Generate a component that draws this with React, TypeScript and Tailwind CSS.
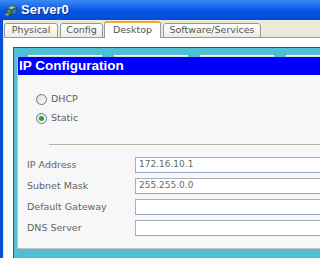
const TABS = [
  { name: "Physical", w: "w-[54px]" },
  { name: "Config", w: "w-[43px]" },
];

function ServerIcon() {
  return (
    <svg width="13" height="13" viewBox="0 0 13 13">
      <path d="M2 4 L7 1.5 L11.5 3.5 L6.5 6 Z" fill="#7fd0a8" stroke="#1d4a3a" strokeWidth="0.7" />
      <path d="M2 4 L6.5 6 L6.5 11.5 L2 9.5 Z" fill="#2f8f5a" stroke="#1d4a3a" strokeWidth="0.7" />
      <path d="M6.5 6 L11.5 3.5 L11.5 9 L6.5 11.5 Z" fill="#3a6fb8" stroke="#1d3a6a" strokeWidth="0.7" />
      <rect x="3" y="6.5" width="2" height="1.2" fill="#e0506a" />
      <rect x="0.5" y="9.5" width="3" height="2" fill="#c8a040" />
    </svg>
  );
}

function Radio({ checked }: { checked?: boolean }) {
  return (
    <span className="w-[11px] h-[11px] rounded-full border border-[#5f7896] bg-linear-to-br from-[#dcdcd6] to-white flex items-center justify-center shrink-0">
      {checked && <span className="w-[5px] h-[5px] rounded-full bg-[#2aa52a]" />}
    </span>
  );
}

const FIELDS = [
  { label: "IP Address", value: "172.16.10.1" },
  { label: "Subnet Mask", value: "255.255.0.0" },
  { label: "Default Gateway", value: "" },
  { label: "DNS Server", value: "" },
];

export default function App() {
  return (
    <div className="w-[320px] h-[258px] overflow-hidden flex flex-col bg-white font-['DejaVu_Sans',sans-serif]">
      {/* Title bar */}
      <div className="h-[20px] shrink-0 flex items-center gap-[3px] pl-[5px] bg-linear-to-b from-[#3a8af4] via-[#0559e6] to-[#014bd4]">
        <ServerIcon />
        <span className="text-white font-bold text-[13px] font-['Liberation_Sans',sans-serif] [text-shadow:1px_1px_0_#0a2a8a]">
          Server0
        </span>
      </div>

      <div className="flex flex-1 min-h-0">
        <div className="w-[3px] shrink-0 bg-[#0b4ed8]" />
        <div className="w-px shrink-0 bg-[#dfe4ee]" />

        <div className="flex-1 flex flex-col min-w-0">
          {/* Tabs */}
          <div className="h-[18px] shrink-0 bg-[#ece9d8] flex items-end border-b border-[#919b9c]">
            {TABS.map((t) => (
              <div
                key={t.name}
                className={`${t.w} h-[15px] mr-[2px] -mb-px border border-[#919b9c] rounded-t-[3px] bg-linear-to-b from-white to-[#ecebe5] flex items-center justify-center text-[9.5px] text-[#555]`}
              >
                {t.name}
              </div>
            ))}
            <div className="w-[57px] h-[17px] -ml-px mr-[2px] -mb-px relative border-x border-[#919b9c] border-t-[2px] border-t-[#f3a532] rounded-t-[3px] bg-white flex items-center justify-center text-[9.5px] text-[#555]">
              Desktop
            </div>
            <div className="w-[98px] h-[15px] -mb-px border border-[#919b9c] rounded-t-[3px] bg-linear-to-b from-white to-[#ecebe5] flex items-center justify-center text-[9.5px] text-[#555]">
              Software/Services
            </div>
          </div>

          {/* Desktop content */}
          <div className="flex-1 min-h-0 flex flex-col bg-white pl-[9px] pt-[9px]">
            <div className="flex-1 min-h-0 flex flex-col border-l border-t border-[#5b4c40] bg-[#4ebfd5] pl-[3px]">
              <div className="h-[9px] shrink-0 flex items-end gap-[12px] pl-[11px]">
                {[0, 1, 2, 3].map((i) => (
                  <div key={i} className="w-[74px] shrink-0 h-[2px] bg-[#dedcd6] border-t border-white" />
                ))}
              </div>

              <div className="flex-1 min-h-0 flex flex-col mb-[9px] border-l border-[#b9c3c8]">
                <div className="h-[18px] shrink-0 bg-[#0000ff] flex items-center pl-[1px] text-white font-bold text-[13.5px] font-['Liberation_Sans',sans-serif]">
                  IP Configuration
                </div>
                <div className="h-px shrink-0 bg-white" />
                <div className="flex-1 bg-[#f7f7f7] border-b border-[#c4c4c0] flex flex-col pt-[16px]">
                  <div className="flex flex-col gap-[5px] pl-[18px]">
                    <div className="h-[14px] flex items-center gap-[4px] text-[9.5px] text-[#606060]">
                      <Radio />
                      <span>DHCP</span>
                    </div>
                    <div className="h-[14px] flex items-center gap-[4px] text-[9.5px] text-[#606060]">
                      <Radio checked />
                      <span>Static</span>
                    </div>
                  </div>

                  <div className="mt-[19px] ml-[31px] h-px bg-[#b8b0a0]" />

                  <div className="mt-[12px] flex flex-col gap-[5px]">
                    {FIELDS.map((f) => (
                      <div key={f.label} className="h-[16px] flex items-center">
                        <span className="w-[117px] shrink-0 pl-[9px] text-[9.5px] text-[#646464]">
                          {f.label}
                        </span>
                        <div className="flex-1 -mr-[10px] h-[16px] border border-[#a6aeba] border-b-[#97a5c4] bg-white flex items-center pl-[3px] text-[9px] text-[#6a6a6a]">
                          {f.value}
                        </div>
                      </div>
                    ))}
                  </div>
                </div>
              </div>
            </div>
          </div>
        </div>
      </div>
    </div>
  );
}
